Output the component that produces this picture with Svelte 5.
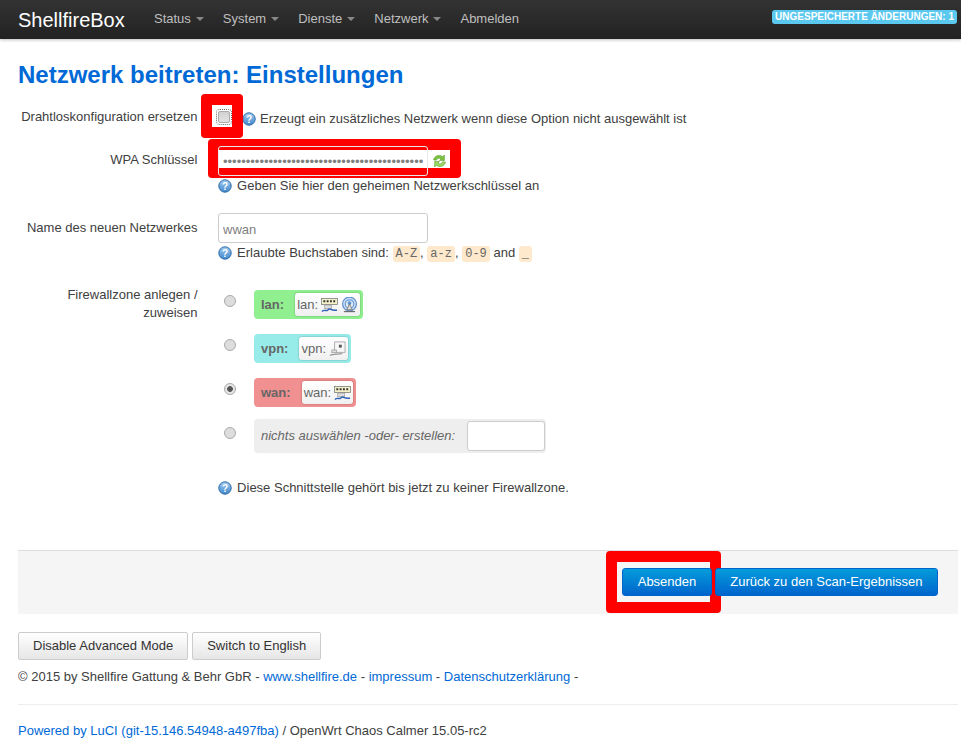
<script>
  const nav = ['Status', 'System', 'Dienste', 'Netzwerk'];
  const zones = [
    { name: 'lan', color: '#90f090', icons: ['eth', 'wifi'], checked: false },
    { name: 'vpn', color: '#97ece9', icons: ['tun'], checked: false },
    { name: 'wan', color: '#f09090', icons: ['eth'], checked: true }
  ];
  const codes = ['A-Z', 'a-z', '0-9'];
  const secret = 'a'.repeat(44);
</script>

{#snippet help()}
  <svg class="help" viewBox="0 0 14 14" width="14" height="14" aria-hidden="true">
    <defs><linearGradient id="hg" x1="0" y1="0" x2="0" y2="1"><stop offset="0" stop-color="#a4cdf0"/><stop offset="1" stop-color="#3f86cc"/></linearGradient></defs>
    <circle cx="7" cy="7" r="6.2" fill="url(#hg)" stroke="#2c6aa8" stroke-width="1"/>
    <text x="7" y="10.6" text-anchor="middle" font-size="10" font-weight="700" font-family="Liberation Sans, sans-serif" fill="#fff">?</text>
  </svg>
{/snippet}

{#snippet zicon(kind)}
  {#if kind === 'eth'}
    <svg class="zi" viewBox="0 0 18 16" width="17" height="16" aria-hidden="true">
      <rect x="0.5" y="1" width="17" height="6.5" fill="#f4f0c8" stroke="#777" stroke-width="0.8"/>
      <path d="M2.500 3h2v2h-2zM6 3h2v2H6zM9.500 3h2v2h-2zM13 3h2v2h-2z" fill="#333"/>
      <rect x="4" y="8" width="7" height="4" fill="#ddd" stroke="#888" stroke-width="0.6"/>
      <path d="M1 15c3-3 4 0 6-1.500s2-1.500 4-.5 4 .5 6 .5" fill="none" stroke="#2f62b8" stroke-width="1.500"/>
    </svg>
  {:else if kind === 'wifi'}
    <svg class="zi" viewBox="0 0 18 16" width="17" height="16" aria-hidden="true">
      <circle cx="9" cy="7" r="7.300" fill="#cfe0f4" stroke="#5b8fd0" stroke-width="1.300"/>
      <circle cx="9" cy="7" r="4.500" fill="#e4eefa" stroke="#6d9dd8" stroke-width="1.300"/>
      <circle cx="9" cy="6" r="2" fill="#5b8fd0"/>
      <path d="M9 7l-3 6h6z" fill="#ddd" stroke="#666" stroke-width="0.800"/>
      <path d="M3 15h12" stroke="#666" stroke-width="1.200"/>
    </svg>
  {:else}
    <svg class="zi" viewBox="0 0 18 16" width="17" height="16" aria-hidden="true">
      <rect x="6" y="0.500" width="11" height="11" fill="#f6f6f6" stroke="#999" stroke-width="0.800"/>
      <rect x="10.500" y="3.500" width="3" height="3" fill="#555"/>
      <rect x="3" y="9" width="5" height="3" fill="#ddd" stroke="#888" stroke-width="0.600"/>
      <path d="M1 15c3-2 5-1 7-1.500s4-.5 6-.5" fill="none" stroke="#999" stroke-width="1.300"/>
    </svg>
  {/if}
{/snippet}

<header class="navbar">
  <a class="brand" href="#top">ShellfireBox</a>
  <nav class="menu">
    {#each nav as item}
      <a href="#top">{item}<span class="caret"></span></a>
    {/each}
    <a href="#top">Abmelden</a>
  </nav>
  <span class="badge">UNGESPEICHERTE ÄNDERUNGEN: 1</span>
</header>

<main class="page">
  <h2>Netzwerk beitreten: Einstellungen</h2>

  <div class="row r1">
    <label class="lbl" for="rep">Drahtloskonfiguration ersetzen</label>
    <div class="field inline">
      <span class="cb-wrap">
        <span class="mark mark-cb"></span>
        <input id="rep" class="cb" type="checkbox" />
      </span>
      <span class="hint h1">{@render help()} Erzeugt ein zusätzliches Netzwerk wenn diese Option nicht ausgewählt ist</span>
    </div>
  </div>

  <div class="row r2">
    <label class="lbl" for="key">WPA Schlüssel</label>
    <div class="field">
      <div class="keyline">
        <span class="mark mark-key"></span>
        <input id="key" class="txt pw" type="password" value={secret} />
        <svg class="refresh" viewBox="1 1 12 12" width="13" height="14" aria-hidden="true">
          <path d="M1.500 6C2 2.500 6.500 0.500 10 3l1.500-1.500V6.500H7L8.500 5C6.500 3.800 4.500 4.500 4 6.300z" fill="#7cc440" stroke="#4f9426" stroke-width="0.500"/>
          <path d="M12.500 8C12 11.500 7.500 13.500 4 11l-1.500 1.500V7.500H7L5.500 9c2 1.200 4 .5 4.500-1.300z" fill="#9ad860" stroke="#4f9426" stroke-width="0.500"/>
        </svg>
      </div>
      <div class="hint h2">{@render help()} Geben Sie hier den geheimen Netzwerkschlüssel an</div>
    </div>
  </div>

  <div class="row r3">
    <label class="lbl" for="ssid">Name des neuen Netzwerkes</label>
    <div class="field">
      <input id="ssid" class="txt" type="text" placeholder="wwan" />
      <div class="hint h2">
        {@render help()} Erlaubte Buchstaben sind:
        {#each codes as c, i}<code>{c}</code>{i < 2 ? ', ' : ' '}{/each}and <code>_</code>
      </div>
    </div>
  </div>

  <div class="row r4">
    <span class="lbl">Firewallzone anlegen /<br />zuweisen</span>
    <div class="field">
      {#each zones as z}
        <div class="zrow">
          <input class="rd" type="radio" name="zone" checked={z.checked} />
          <div class="zone" style="background-color: {z.color}">
            <strong>{z.name}:</strong>
            <span class="chip"><span>{z.name}:</span>{#each z.icons as k}{@render zicon(k)}{/each}</span>
          </div>
        </div>
      {/each}
      <div class="zrow none">
        <input class="rd" type="radio" name="zone" />
        <div class="zone grey">
          <em>nichts auswählen -oder- erstellen:</em>
          <input class="newz" type="text" />
        </div>
      </div>
      <div class="hint h4">{@render help()} Diese Schnittstelle gehört bis jetzt zu keiner Firewallzone.</div>
    </div>
  </div>

  <div class="actions">
    <span class="mark mark-btn"></span>
    <button class="primary">Absenden</button>
    <button class="primary">Zurück zu den Scan-Ergebnissen</button>
  </div>

  <footer>
    <div class="btns">
      <button class="plain">Disable Advanced Mode</button>
      <button class="plain">Switch to English</button>
    </div>
    <p class="copy">© 2015 by Shellfire Gattung &amp; Behr GbR - <a href="#top">www.shellfire.de</a> - <a href="#top">impressum</a> - <a href="#top">Datenschutzerklärung</a> -</p>
    <hr />
    <p class="pow"><a href="#top">Powered by LuCI (git-15.146.54948-a497fba)</a> / OpenWrt Chaos Calmer 15.05-rc2</p>
  </footer>
</main>

<style>
  :global(body) {
    margin: 0;
    background: #fff;
    font-family: "Liberation Sans", Arial, sans-serif;
    font-size: 13px;
    line-height: 18px;
    color: #404040;
  }
  a { color: #0069d6; text-decoration: none; }

  .navbar {
    height: 39px;
    box-sizing: border-box;
    display: flex;
    align-items: center;
    padding-left: 18px;
    background: linear-gradient(#333, #222);
    box-shadow: 0 1px 3px rgba(0,0,0,.25);
    position: relative;
  }
  .brand { color: #fff; font-size: 20px; line-height: 36px; width: 136px; flex: none; }
  .menu { display: flex; gap: 19px; margin-top: -2px; }
  .menu a { color: #bfbfbf; font-size: 13px; line-height: 37px; }
  .caret {
    display: inline-block;
    margin-left: 5px;
    vertical-align: 2px;
    border-left: 4px solid transparent;
    border-right: 4px solid transparent;
    border-top: 4px solid #888;
  }
  .badge {
    margin-left: auto;
    margin-right: 4px;
    margin-top: -5px;
    background: #5bc8f0;
    color: #fff;
    font-size: 10px;
    font-weight: 700;
    line-height: 14px;
    padding: 0 3px;
    border-radius: 3px;
    white-space: nowrap;
  }

  .page { width: 940px; margin-left: 18px; padding-top: 21px; }
  h2 { margin: 0; font-size: 24px; line-height: 30px; font-weight: 700; color: #0069d6; }

  .row { display: grid; grid-template-columns: 179.500px 1fr; column-gap: 20.500px; }
  .lbl { text-align: right; display: block; }
  .field { min-width: 0; }
  .inline { display: flex; align-items: flex-start; }

  .r1 { margin-top: 16px; height: 40px; align-items: start; }
  .r1 .lbl { padding-top: 2px; }
  .cb-wrap { position: relative; display: block; width: 24px; height: 22px; }
  .cb {
    appearance: none;
    position: absolute;
    left: 0; top: 5px;
    margin: 0;
    width: 12px; height: 12px;
    box-sizing: border-box;
    border: 1px solid #aaa;
    border-radius: 2px;
    background: linear-gradient(#d2d2d2, #e2e2e2);
    outline: 1px dotted #666;
    outline-offset: 1px;
  }
  .h1 { padding-top: 4px; display: inline-flex; align-items: center; gap: 4px; }

  .mark { position: absolute; border-style: solid; border-color: #f00; border-radius: 4px; pointer-events: none; }
  .mark-cb { left: -17px; top: -12px; width: 20px; height: 22px; border-width: 11px; }

  .r2 { height: 67px; }
  .r2 .lbl { padding-top: 5px; }
  .keyline { position: relative; display: flex; align-items: center; height: 30px; }
  .mark-key { left: -10px; top: -7px; width: 231px; height: 18px; border-width: 11px 11px 10px; z-index: 1; }
  .txt {
    box-sizing: border-box;
    width: 210px; height: 30px;
    border: 1px solid #ccc;
    border-radius: 3px;
    padding: 5px 4px 3px;
    font: 13px/18px "Liberation Sans", Arial, sans-serif;
    color: #808080;
    background: #fff;
  }
  .txt::placeholder { color: #808080; opacity: 1; }
  .pw { position: relative; z-index: 2; background: transparent; border-color: #e8e8e8; padding: 4px; }
  .refresh { position: relative; z-index: 2; margin-left: 5px; }
  .hint { color: #404040; }
  .h2 { margin-top: 1px; }
  .help { vertical-align: -3px; margin-right: 1.500px; }
  .h1 .help { margin-right: 0; }

  .r3 { height: 77px; }
  .r3 .lbl { padding-top: 6px; }
  code {
    font: 12px/18px "Liberation Mono", monospace;
    background: #fee9cc;
    color: #666;
    padding: 1px 3px;
    border-radius: 3px;
  }

  .r4 .lbl { margin-top: -4px; }
  .zrow { display: flex; align-items: flex-start; height: 44px; }
  .zrow.none { height: 60px; margin-top: -3px; }
  .none .rd { margin-top: 8px; }
  .rd {
    appearance: none;
    margin: 5px 18px 0 6px;
    width: 12px; height: 12px;
    flex: none;
    border: 1px solid #aaa;
    border-radius: 50%;
    background: #ddd;
    box-sizing: border-box;
  }
  .rd:checked { background: radial-gradient(circle, #555 0 2.500px, #e6e6e6 3.200px); }
  .zone {
    display: inline-flex;
    align-items: center;
    height: 29px;
    border-radius: 4px;
    padding: 0 3px 0 7px;
    color: #666;
  }
  .zone strong { margin-right: 11px; }
  .chip {
    display: inline-flex;
    align-items: center;
    gap: 3px;
    height: 23px;
    padding: 0 2px;
    background: linear-gradient(#fff, #f0f0f0);
    border-radius: 3px;
    box-shadow: 0 0 2px rgba(0,0,0,.35);
  }
  .chip .zi { flex: none; }
  .grey { background: #eee; height: 34px; padding: 0 1px 0 7px; }
  .grey em { margin-right: 12px; }
  .newz {
    box-sizing: border-box;
    width: 78px; height: 30px;
    border: 1px solid #ccc;
    border-radius: 3px;
    background: #fff;
  }
  .h4 { margin-top: 0; }

  .actions {
    position: relative;
    margin-top: 53px;
    height: 64px;
    box-sizing: border-box;
    border-top: 1px solid #ddd;
    background: #f5f5f5;
    display: flex;
    justify-content: flex-end;
    align-items: flex-start;
    padding: 17px 20px 0 0;
    gap: 3px;
  }
  .mark-btn { left: 588px; top: 0; width: 93px; height: 40px; border-width: 11px; }
  button { font-family: inherit; font-size: 13px; line-height: 18px; cursor: pointer; }
  .primary {
    position: relative;
    height: 28px;
    padding: 0 14.500px;
    color: #fff;
    border: 1px solid #0064cd;
    border-radius: 3px;
    background: linear-gradient(#049cdb, #0064cd);
  }
  .btns { margin-top: 18px; display: flex; gap: 4px; }
  .plain {
    height: 28px;
    padding: 0 14px;
    color: #333;
    background: linear-gradient(#fff, #e6e6e6);
    border: 1px solid #ccc;
    border-radius: 2px;
  }
  .copy { margin: 8px 0 0; }
  hr { border: 0; border-top: 1px solid #eee; margin: 18px 0 0; }
  .pow { margin: 17px 0 0; }
</style>
